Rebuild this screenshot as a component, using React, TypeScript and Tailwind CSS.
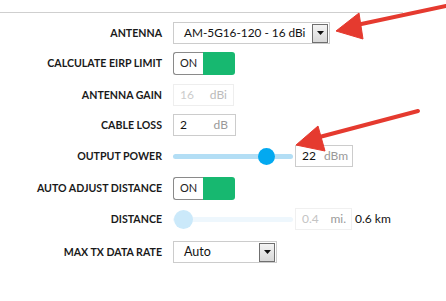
import React from "react";

const Label = ({ children }: { children: React.ReactNode }) => (
  <div className="w-[162px] shrink-0 text-right text-[10.6px] font-bold text-[#1a1a1a] leading-none whitespace-nowrap">
    {children}
  </div>
);

const DropBtn = () => (
  <div className="shrink-0 w-[16px] h-[19px] border border-[#6f6f6f] bg-gradient-to-b from-[#f4f4f4] to-[#d8d8d8] flex items-center justify-center">
    <svg width="7" height="4" viewBox="0 0 7 4">
      <path d="M0 0 L7 0 L3.5 4 Z" fill="#111" />
    </svg>
  </div>
);

const Toggle = () => (
  <div className="flex h-[23px] w-[62px]">
    <div className="w-[30px] h-full border border-[#8a8a8a] border-r-0 rounded-l-[3px] bg-white flex items-center justify-center text-[11px] text-[#222]">
      ON
    </div>
    <div className="w-[32px] h-full bg-[#17b870] rounded-r-[3px]" />
  </div>
);

export default function App() {
  return (
    <div className="relative w-[446px] h-[301px] bg-white overflow-hidden" style={{ fontFamily: "Lato, 'Open Sans', sans-serif" }}>
      <div className="pt-[12px]">
        <div className="w-[403px] border-t border-[#cfcfcf]" />
      </div>
      <div className="mt-[5px] flex flex-col">
        <div className="h-[30px] flex items-center gap-[11px]">
          <Label>ANTENNA</Label>
          <div className="w-[157px] h-[22px] border border-[#cccccc] bg-white flex items-center justify-between pl-[10px] pr-[1px]">
            <span className="text-[11.8px] text-[#111] leading-none whitespace-nowrap">AM-5G16-120 - 16 dBi</span>
            <DropBtn />
          </div>
        </div>
        <div className="h-[30px] flex items-center gap-[11px]">
          <Label>CALCULATE EIRP LIMIT</Label>
          <Toggle />
        </div>
        <div className="h-[34px] flex items-center gap-[11px]">
          <Label>ANTENNA GAIN</Label>
          <div className="w-[61px] h-[22px] border border-[#eeeeee] flex items-center justify-between px-[6px] text-[12px] leading-none">
            <span className="text-[#cccccc]">16</span>
            <span className="text-[#bbbbbb]">dBi</span>
          </div>
        </div>
        <div className="h-[26px] flex items-center gap-[11px]">
          <Label>CABLE LOSS</Label>
          <div className="w-[63px] h-[22px] border border-[#cccccc] flex items-center justify-between pl-[6px] pr-[7px] text-[12px] leading-none">
            <span className="text-[#111]">2</span>
            <span className="text-[#999999]">dB</span>
          </div>
        </div>
        <div className="h-[36px] flex items-center gap-[11px]">
          <Label>OUTPUT POWER</Label>
          <div className="flex items-center">
            <div className="relative w-[120px] h-[5px] rounded-full bg-[#b3def5]">
              <div className="absolute left-[85px] top-[-6px] w-[17px] h-[17px] rounded-full bg-[#03a9f0]" />
            </div>
            <div className="ml-[2px] w-[58px] h-[22px] border border-[#cccccc] flex items-center pl-[6px] gap-[8px] text-[12px] leading-none">
              <span className="text-[#111]">22</span>
              <span className="text-[#999999]">dBm</span>
            </div>
          </div>
        </div>
        <div className="h-[28px] flex items-center gap-[11px]">
          <Label>AUTO ADJUST DISTANCE</Label>
          <Toggle />
        </div>
        <div className="h-[34px] flex items-center gap-[11px]">
          <Label>DISTANCE</Label>
          <div className="flex items-center">
            <div className="relative w-[120px] h-[5px] rounded-full bg-[#eef7fd]">
              <div className="absolute left-[1px] top-[-7px] w-[19px] h-[19px] rounded-full bg-[#cbe9fa]" />
            </div>
            <div className="ml-[2px] w-[57px] h-[22px] border border-[#f0f0f0] flex items-center justify-between px-[5px] text-[12px] leading-none">
              <span className="text-[#c4c4c4] pl-[1px]">0.4</span>
              <span className="text-[#9a9a9a]">mi.</span>
            </div>
            <span className="ml-[3px] text-[12px] text-[#111] leading-none whitespace-nowrap">0.6 km</span>
          </div>
        </div>
        <div className="h-[32px] flex items-center gap-[11px]">
          <Label>MAX TX DATA RATE</Label>
          <div className="w-[104px] h-[22px] border border-[#cccccc] bg-white flex items-center justify-between pl-[10px] pr-[1px]">
            <span className="text-[12.5px] text-[#111] leading-none">Auto</span>
            <DropBtn />
          </div>
        </div>
      </div>
      <svg className="absolute left-0 top-0 pointer-events-none" width="446" height="301" viewBox="0 0 446 301">
        <g fill="#e53a2f" stroke="#e53a2f" strokeLinejoin="round">
          <line x1="352" y1="26" x2="446" y2="6" strokeWidth="4" strokeLinecap="round" />
          <path d="M336 31 L359 13 L363 39 Z" strokeWidth="1" />
          <line x1="312" y1="139" x2="418" y2="111" strokeWidth="4" strokeLinecap="round" />
          <path d="M296 145 L318 126 L325 151 Z" strokeWidth="1" />
        </g>
      </svg>
    </div>
  );
}
